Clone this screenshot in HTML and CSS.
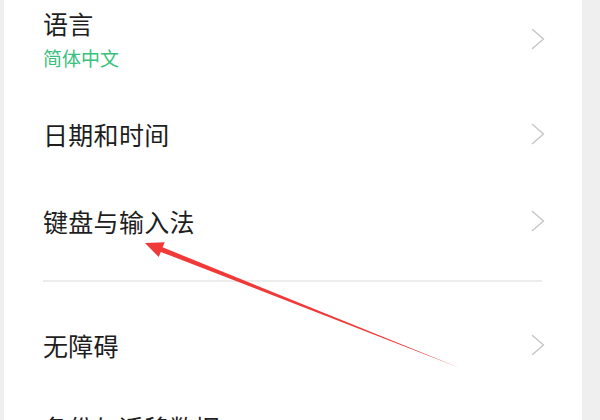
FILE: index.html
```html
<!DOCTYPE html>
<html lang="zh-CN">
<head>
<meta charset="utf-8">
<title>设置</title>
<link rel="stylesheet" href="styles.css">
</head>
<body>
<div class="screen">
  <div class="list">
    <div class="row row-first">
      <div class="texts">
        <div class="title">语言</div>
        <div class="sub">简体中文</div>
      </div>
      <svg class="chev" viewBox="0 0 14 22"><path d="M1.5 1.5 L12.5 11 L1.5 20.5" /></svg>
    </div>
    <div class="row">
      <div class="title">日期和时间</div>
      <svg class="chev" viewBox="0 0 14 22"><path d="M1.5 1.5 L12.5 11 L1.5 20.5" /></svg>
    </div>
    <div class="row">
      <div class="title">键盘与输入法</div>
      <svg class="chev" viewBox="0 0 14 22"><path d="M1.5 1.5 L12.5 11 L1.5 20.5" /></svg>
    </div>
    <div class="divider"></div>
    <div class="row">
      <div class="title">无障碍</div>
      <svg class="chev" viewBox="0 0 14 22"><path d="M1.5 1.5 L12.5 11 L1.5 20.5" /></svg>
    </div>
    <div class="row row-last">
      <div class="title">备份与迁移数据</div>
    </div>
  </div>
  <svg class="arrow" viewBox="0 0 600 420" width="600" height="420">
    <polygon points="145,243 164.7,242.2 162.6,247.3 460,368 160.8,251.9 158.7,257" />
  </svg>
</div>
</body>
</html>
```
FILE: styles.css
```css
html, body {
  margin: 0;
  padding: 0;
  height: 100%;
  overflow: hidden;
}
body {
  background: #efefef;
  font-family: "Noto Sans CJK SC", "Noto Sans", sans-serif;
}
.screen {
  position: relative;
  width: 600px;
  height: 420px;
  display: flex;
}
.list {
  margin: 0 18px 0 4px;
  flex: 1;
  background: #ffffff;
  padding: 0 37px 0 39px;
  display: flex;
  flex-direction: column;
}
.row {
  height: 87px;
  flex-shrink: 0;
  display: flex;
  align-items: center;
  justify-content: space-between;
}
.row-first {
  height: 90px;
  padding-bottom: 12px;
  box-sizing: border-box;
}
.row-last {
  align-items: flex-start;
  padding-top: 24px;
  box-sizing: border-box;
}
.texts {
  display: flex;
  flex-direction: column;
  gap: 9px;
  margin-top: -2px;
}
.title {
  font-size: 25px;
  line-height: 30px;
  color: #1e1e1e;
  letter-spacing: 0.3px;
}
.sub {
  font-size: 19px;
  line-height: 22px;
  color: #38c17c;
}
.chev {
  width: 14px;
  height: 22px;
  fill: none;
  stroke: #c8c8c8;
  stroke-width: 1.6;
  stroke-linecap: round;
  stroke-linejoin: round;
}
.divider {
  height: 2px;
  background: #ececec;
  margin: 16px 3px 19px 0;
  flex-shrink: 0;
}
.arrow {
  position: absolute;
  left: 0;
  top: 0;
  pointer-events: none;
}
.arrow polygon {
  fill: #f03a3a;
}
```
